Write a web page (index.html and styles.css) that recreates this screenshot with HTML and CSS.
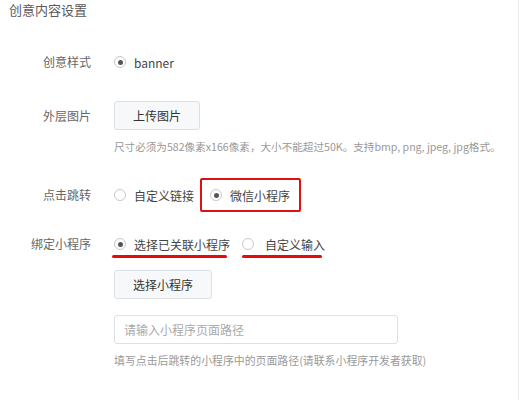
FILE: index.html
```html
<!DOCTYPE html>
<html lang="zh-CN">
<head>
<meta charset="utf-8">
<title>创意内容设置</title>
<link rel="stylesheet" href="styles.css">
</head>
<body>
<div class="page">
  <div class="title">创意内容设置</div>
  <div class="form">
    <div class="row row-style">
      <div class="label">创意样式</div>
      <div class="control">
        <label class="radio checked"><span class="dot"></span><span>banner</span></label>
      </div>
    </div>

    <div class="row row-img">
      <div class="label tall">外层图片</div>
      <div class="control">
        <button class="btn btn-upload">上传图片</button>
        <div class="hint hint-img">尺寸必须为582像素x166像素，大小不能超过50K。支持bmp, png, jpeg, jpg格式。</div>
      </div>
    </div>

    <div class="row row-jump">
      <div class="label boxed">点击跳转</div>
      <div class="control group">
        <label class="radio"><span class="dot"></span><span>自定义链接</span></label>
        <label class="radio checked highlight"><span class="dot"></span><span>微信小程序</span></label>
      </div>
    </div>

    <div class="row row-bind">
      <div class="label">绑定小程序</div>
      <div class="control group annotated">
        <label class="radio checked"><span class="dot"></span><span>选择已关联小程序</span></label>
        <label class="radio second"><span class="dot"></span><span>自定义输入</span></label>
        <span class="mark mark-1"></span>
        <span class="mark mark-2"></span>
      </div>
    </div>

    <div class="row row-select">
      <div class="label"></div>
      <div class="control">
        <button class="btn btn-select">选择小程序</button>
        <input class="input" type="text" placeholder="请输入小程序页面路径">
        <div class="hint hint-path">填写点击后跳转的小程序中的页面路径(请联系小程序开发者获取)</div>
      </div>
    </div>
  </div>
</div>
</body>
</html>
```

FILE: styles.css
```css
* { box-sizing: border-box; }
html, body { margin: 0; padding: 0; background: #fff; }
body {
  font-family: "Noto Sans CJK SC", "Noto Sans", sans-serif;
  color: #333;
}
.page {
  width: 519px;
  height: 400px;
  border-right: 1px solid #ececec;
  overflow: hidden;
}
.title {
  height: 20px;
  line-height: 20px;
  padding-left: 9px;
  font-size: 13px;
  color: #5a5a5a;
}
.form { margin-top: 30px; }
.row {
  display: grid;
  grid-template-columns: 91px 1fr;
  column-gap: 23px;
  align-items: start;
}
.label {
  text-align: right;
  font-size: 12px;
  line-height: 24px;
  color: #666;
}
.label.tall { line-height: 29px; }
.label.boxed { line-height: 34px; }
.control { font-size: 12px; }
.radio {
  display: inline-flex;
  align-items: center;
  gap: 8px;
  height: 24px;
  color: #444;
  font-size: 12px;
}
.dot {
  width: 12px;
  height: 12px;
  border: 1px solid #c8c8c8;
  border-radius: 50%;
  display: inline-flex;
  align-items: center;
  justify-content: center;
  background: #fff;
}
.radio.checked .dot::after {
  content: "";
  width: 5px;
  height: 5px;
  border-radius: 50%;
  background: #555;
}
.btn {
  font-family: inherit;
  font-size: 12px;
  color: #333;
  background: #f7f8fa;
  border: 1px solid #dcdfe3;
  border-radius: 3px;
  height: 29px;
  padding: 0;
  display: block;
}
.btn-upload { width: 86px; }
.btn-select { width: 98px; margin-top: 14px; }
.hint {
  font-size: 10.6px;
  line-height: 16px;
  color: #999;
  white-space: nowrap;
}
.row-img { margin-top: 27px; }
.hint-img { margin-top: 9px; }
.row-jump { margin-top: 23px; }
.group { display: flex; align-items: center; gap: 6px; }
.row-jump .group { height: 34px; }
.highlight {
  height: 34px;
  border: 2px solid #e01010;
  border-radius: 2px;
  padding: 0 9px 0 8px;
}
.row-bind { margin-top: 20px; }
.annotated { position: relative; height: 24px; gap: 12px; }
.radio.second { gap: 11px; }
.mark {
  position: absolute;
  top: 23px;
  height: 3px;
  border-radius: 2px;
  background: #e30d0d;
}
.mark-1 { left: -2px; width: 115px; }
.mark-2 { left: 128px; width: 80px; }
.input {
  display: block;
  margin-top: 16px;
  width: 284px;
  height: 29px;
  border: 1px solid #dcdfe3;
  border-radius: 3px;
  padding: 0 9px;
  font-family: inherit;
  font-size: 12px;
  color: #333;
  outline: none;
}
.input::placeholder { color: #aaa; }
.hint-path { margin-top: 8px; font-size: 10.9px; }
```
